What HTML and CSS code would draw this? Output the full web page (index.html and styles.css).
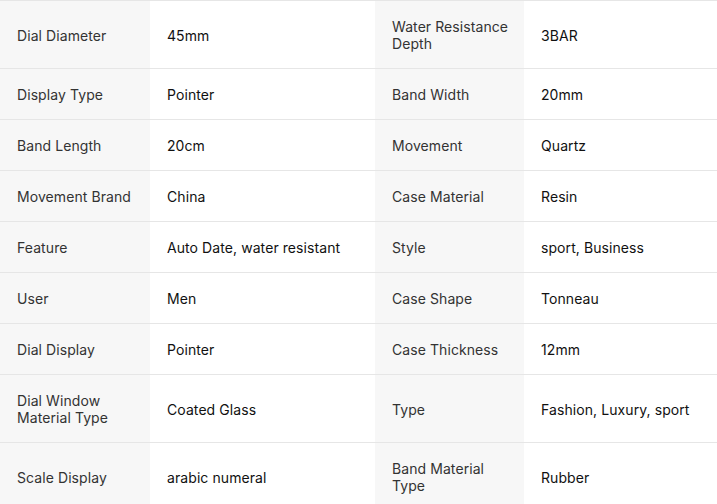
FILE: index.html
```html
<!DOCTYPE html>
<html lang="en">
<head>
<meta charset="utf-8">
<title>Specifications</title>
<link rel="stylesheet" href="styles.css">
</head>
<body>
<table class="specs">
  <colgroup>
    <col class="c-label1"><col class="c-value1"><col class="c-label2"><col class="c-value2">
  </colgroup>
  <tbody>
    <tr><th>Dial Diameter</th><td>45mm</td><th>Water Resistance Depth</th><td>3BAR</td></tr>
    <tr><th>Display Type</th><td>Pointer</td><th>Band Width</th><td>20mm</td></tr>
    <tr><th>Band Length</th><td>20cm</td><th>Movement</th><td>Quartz</td></tr>
    <tr><th>Movement Brand</th><td>China</td><th>Case Material</th><td>Resin</td></tr>
    <tr><th>Feature</th><td>Auto Date, water resistant</td><th>Style</th><td>sport, Business</td></tr>
    <tr><th>User</th><td>Men</td><th>Case Shape</th><td>Tonneau</td></tr>
    <tr><th>Dial Display</th><td>Pointer</td><th>Case Thickness</th><td>12mm</td></tr>
    <tr><th>Dial Window Material Type</th><td>Coated Glass</td><th>Type</th><td>Fashion, Luxury, sport</td></tr>
    <tr><th>Scale Display</th><td>arabic numeral</td><th>Band Material Type</th><td>Rubber</td></tr>
  </tbody>
</table>
</body>
</html>
```
FILE: styles.css
```css
html, body {
  margin: 0;
  padding: 0;
  background: #ffffff;
}
.specs {
  width: 717px;
  border-collapse: collapse;
  table-layout: fixed;
  font-family: Inter, "Liberation Sans", sans-serif;
  font-size: 14px;
  line-height: 17px;
  letter-spacing: 0.08px;
}
.c-label1 { width: 150px; }
.c-value1 { width: 225px; }
.c-label2 { width: 149px; }
.c-value2 { width: 193px; }
.specs th,
.specs td {
  border-top: 1px solid #e6e6e6;
  border-bottom: 1px solid #e6e6e6;
  padding: 17px 6px 16px 17px;
  text-align: left;
  vertical-align: middle;
}
.specs th {
  background: #f7f7f7;
  color: #333333;
  font-weight: 400;
}
.specs td {
  background: #ffffff;
  color: #111111;
}
```
